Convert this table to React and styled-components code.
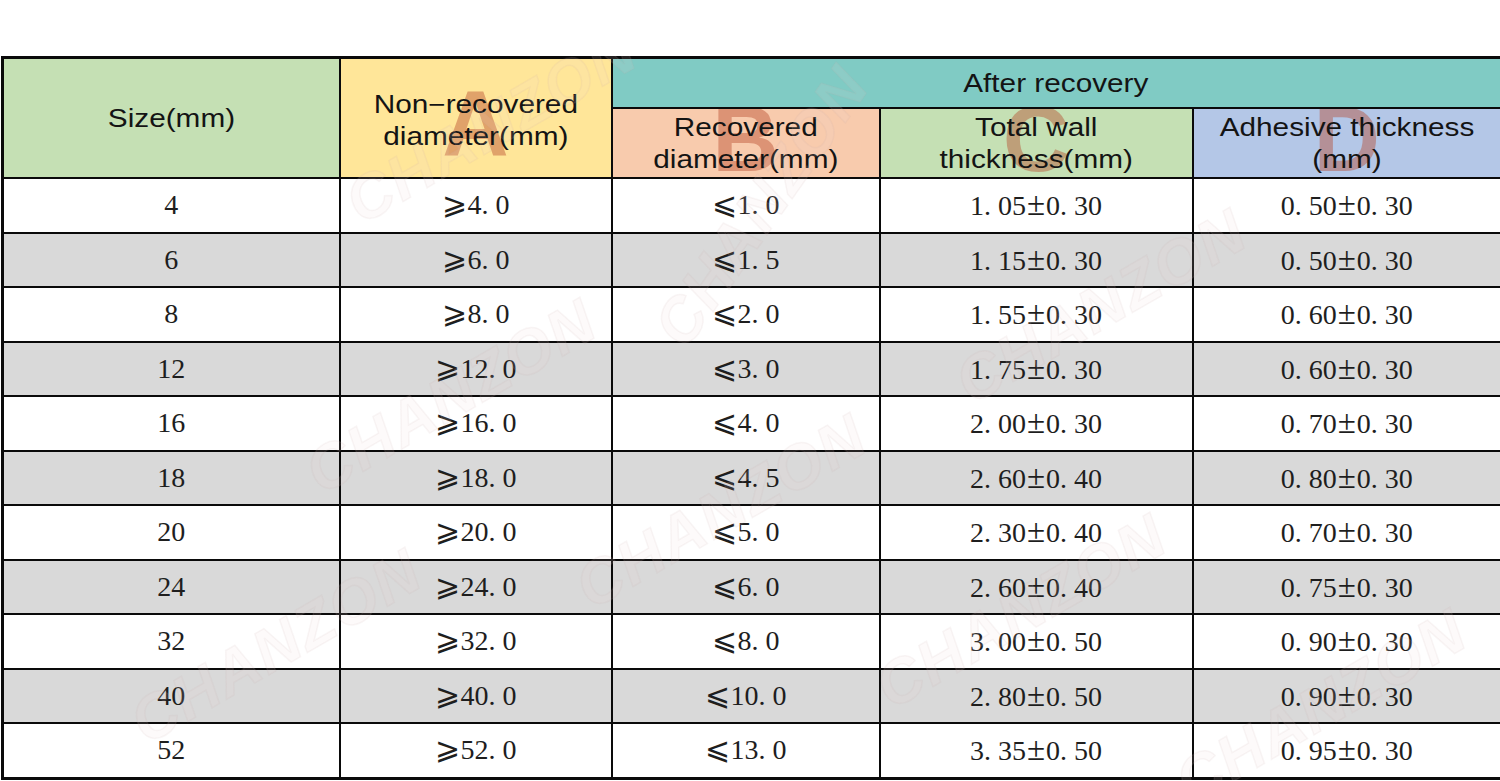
import React from "react";
import styled, { createGlobalStyle } from "styled-components";

const Global = createGlobalStyle`
  html, body { margin: 0; padding: 0; background: #ffffff; }
  body { font-family: "Liberation Sans", Arial, sans-serif; }
`;

const Page = styled.div`
  width: 1500px;
  height: 781px;
  padding: 56px 0 0 1px;
  box-sizing: border-box;
  background: #fff;
  overflow: hidden;
`;

const Frame = styled.div`
  position: relative;
  width: 1499px;
`;

const Table = styled.table`
  width: 1499px;
  border-collapse: collapse;
  table-layout: fixed;
  border: 3px solid #0a0a0a;
`;

const HeadCell = styled.th`
  position: relative;
  overflow: hidden;
  background: ${(p) => p.$bg};
  border: 2px solid #0a0a0a;
  height: ${(p) => p.$h}px;
  padding: 0;
  font-weight: 400;
  font-size: 25px;
  line-height: 32px;
  color: #141414;
  text-align: center;
  vertical-align: middle;
`;

const HeadText = styled.span`
  position: relative;
  z-index: 2;
  display: inline-block;
  transform: scaleX(1.19);
  transform-origin: center;
  white-space: nowrap;
  margin-top: ${(p) => p.$mt || 0}px;
`;

const Letter = styled.span`
  position: absolute;
  z-index: 1;
  left: 50%;
  transform: translateX(-50%);
  bottom: ${(p) => p.$bottom}px;
  font-family: "Liberation Sans", Arial, sans-serif;
  font-weight: 700;
  font-size: 92px;
  line-height: 1;
  color: rgba(180, 70, 40, 0.42);
  pointer-events: none;
`;

const Row = styled.tr`
  background: ${(p) => (p.$shade ? "#d9d9d9" : "#ffffff")};
`;

const Cell = styled.td`
  border: 2px solid #0a0a0a;
  height: 52.5px;
  padding: 0;
  text-align: center;
  vertical-align: middle;
  font-family: "Liberation Serif", "DejaVu Serif", "Times New Roman", serif;
  font-size: 28px;
  color: #1e1e1e;
  white-space: nowrap;
`;

const Dot = styled.span`
  padding-right: 7px;
`;

const Sym = styled.span`
  font-family: "DejaVu Sans", "Liberation Serif", serif;
  font-weight: 200;
  font-size: 30px;
  line-height: 1;
  margin-right: 1px;
`;

const PlusMinus = styled.span`
  font-family: "Liberation Serif", serif;
  font-size: 33px;
  line-height: 1;
  margin: 0 1px;
`;

const Overlay = styled.div`
  position: absolute;
  inset: 0;
  pointer-events: none;
  overflow: hidden;
  z-index: 3;
`;

const Mark = styled.span`
  position: absolute;
  left: ${(p) => p.$x}px;
  top: ${(p) => p.$y}px;
  transform: translate(-50%, -50%) rotate(${(p) => p.$r}deg);
  font-family: "Liberation Sans", Arial, sans-serif;
  font-style: italic;
  font-weight: 700;
  font-size: 62px;
  letter-spacing: 2px;
  color: rgba(240, 215, 215, 0.12);
  -webkit-text-stroke: 1.5px rgba(200, 170, 170, 0.1);
  white-space: nowrap;
`;

const rows = [
  ["4", "≥4.0", "≤1.0", "1.05±0.30", "0.50±0.30"],
  ["6", "≥6.0", "≤1.5", "1.15±0.30", "0.50±0.30"],
  ["8", "≥8.0", "≤2.0", "1.55±0.30", "0.60±0.30"],
  ["12", "≥12.0", "≤3.0", "1.75±0.30", "0.60±0.30"],
  ["16", "≥16.0", "≤4.0", "2.00±0.30", "0.70±0.30"],
  ["18", "≥18.0", "≤4.5", "2.60±0.40", "0.80±0.30"],
  ["20", "≥20.0", "≤5.0", "2.30±0.40", "0.70±0.30"],
  ["24", "≥24.0", "≤6.0", "2.60±0.40", "0.75±0.30"],
  ["32", "≥32.0", "≤8.0", "3.00±0.50", "0.90±0.30"],
  ["40", "≥40.0", "≤10.0", "2.80±0.50", "0.90±0.30"],
  ["52", "≥52.0", "≤13.0", "3.35±0.50", "0.95±0.30"],
];

const marks = [
  { x: 490, y: 70, r: -30 },
  { x: 760, y: 150, r: -55 },
  { x: 450, y: 340, r: -30 },
  { x: 720, y: 455, r: -30 },
  { x: 1100, y: 250, r: -30 },
  { x: 1020, y: 555, r: -30 },
  { x: 275, y: 590, r: -30 },
  { x: 1320, y: 650, r: -30 },
];

function Value({ text }) {
  const parts = [];
  let buf = "";
  const flush = () => {
    if (buf) {
      parts.push(buf);
      buf = "";
    }
  };
  [...text].forEach((ch, i) => {
    if (ch === ".") {
      flush();
      parts.push(<Dot key={"d" + i}>.</Dot>);
    } else if (ch === "≥") {
      flush();
      parts.push(<Sym key={"s" + i}>⩾</Sym>);
    } else if (ch === "≤") {
      flush();
      parts.push(<Sym key={"s" + i}>⩽</Sym>);
    } else if (ch === "±") {
      flush();
      parts.push(<PlusMinus key={"p" + i}>±</PlusMinus>);
    } else {
      buf += ch;
    }
  });
  flush();
  return <>{parts}</>;
}

export default function App() {
  return (
    <>
      <Global />
      <Page>
        <Frame>
          <Table>
            <colgroup>
              <col style={{ width: 337 }} />
              <col style={{ width: 272 }} />
              <col style={{ width: 268 }} />
              <col style={{ width: 313 }} />
              <col style={{ width: 309 }} />
            </colgroup>
            <thead>
              <tr>
                <HeadCell rowSpan={2} $bg="#c5e0b4" $h={48}>
                  <HeadText>Size(mm)</HeadText>
                </HeadCell>
                <HeadCell rowSpan={2} $bg="#ffe699" $h={48}>
                  <Letter $bottom={8}>A</Letter>
                  <HeadText $mt={4}>
                    Non−recovered
                    <br />
                    diameter(mm)
                  </HeadText>
                </HeadCell>
                <HeadCell colSpan={3} $bg="#80cbc4" $h={48}>
                  <HeadText>After recovery</HeadText>
                </HeadCell>
              </tr>
              <tr>
                <HeadCell $bg="#f8cbad" $h={68}>
                  <Letter $bottom={-8}>B</Letter>
                  <HeadText>
                    Recovered
                    <br />
                    diameter(mm)
                  </HeadText>
                </HeadCell>
                <HeadCell $bg="#c5e0b4" $h={68}>
                  <Letter $bottom={-8}>C</Letter>
                  <HeadText>
                    Total wall
                    <br />
                    thickness(mm)
                  </HeadText>
                </HeadCell>
                <HeadCell $bg="#b4c7e7" $h={68}>
                  <Letter $bottom={-8}>D</Letter>
                  <HeadText>
                    Adhesive thickness
                    <br />
                    (mm)
                  </HeadText>
                </HeadCell>
              </tr>
            </thead>
            <tbody>
              {rows.map((r, i) => (
                <Row key={r[0]} $shade={i % 2 === 1}>
                  {r.map((v, j) => (
                    <Cell key={j}>
                      <Value text={v} />
                    </Cell>
                  ))}
                </Row>
              ))}
            </tbody>
          </Table>
          <Overlay>
            {marks.map((m, i) => (
              <Mark key={i} $x={m.x} $y={m.y} $r={m.r}>
                CHANZON
              </Mark>
            ))}
          </Overlay>
        </Frame>
      </Page>
    </>
  );
}
